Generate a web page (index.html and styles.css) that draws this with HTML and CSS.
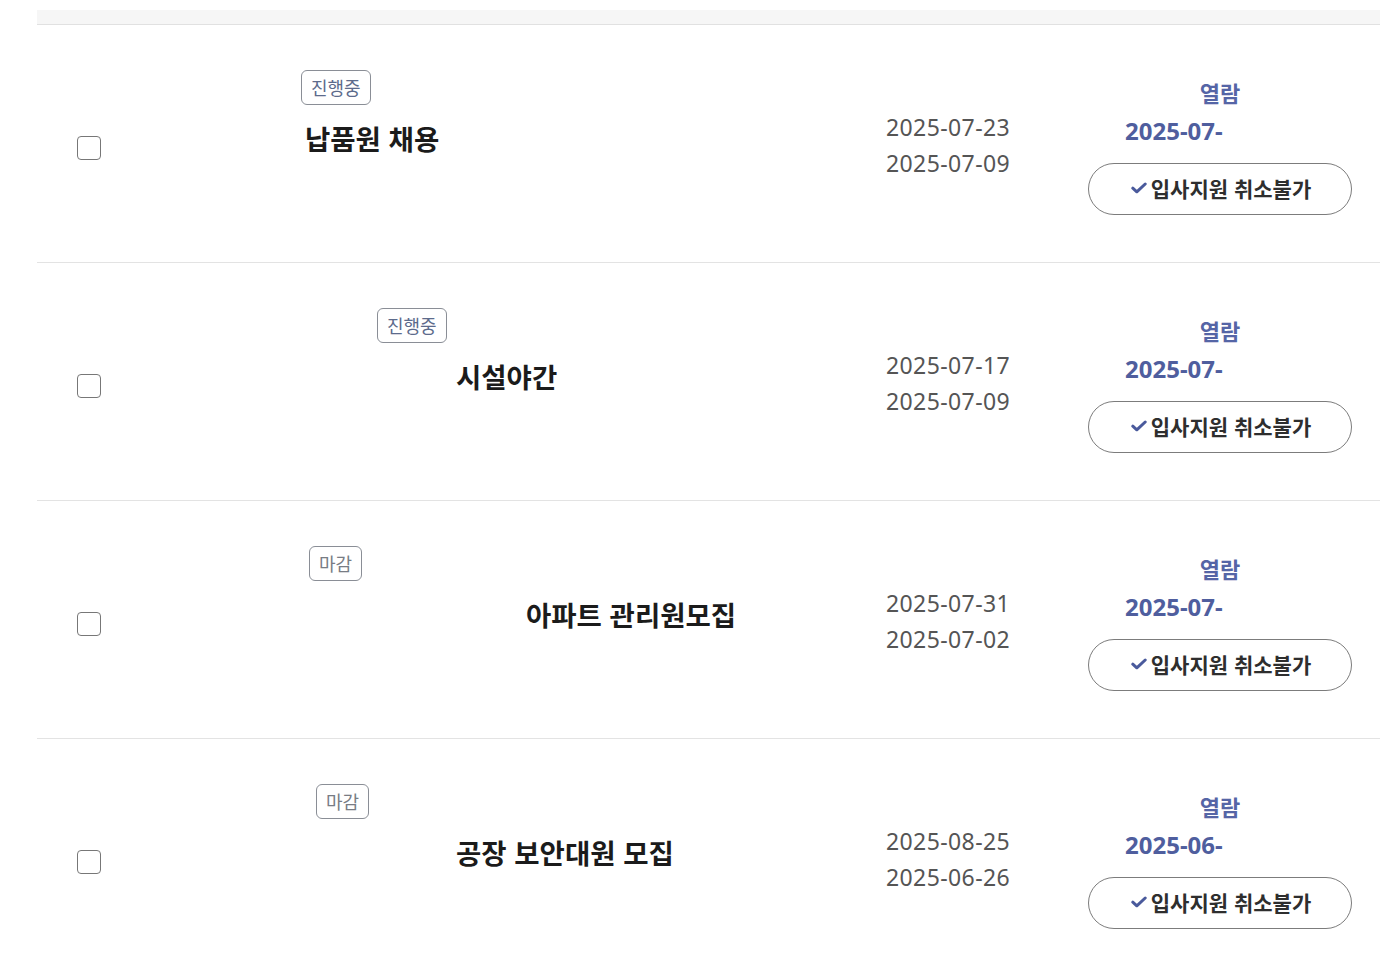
FILE: index.html
```html
<!DOCTYPE html>
<html lang="ko">
<head>
<meta charset="utf-8">
<title>입사지원 현황</title>
<link rel="stylesheet" href="styles.css">
</head>
<body>
<div class="list">
  <div class="list-head"></div>

  <div class="row row-1">
    <div class="cell-check"><span class="checkbox"></span></div>
    <div class="cell-info">
      <span class="badge badge-on">진행중</span>
      <div class="title">납품원 채용</div>
    </div>
    <div class="cell-dates">
      <div class="date">2025-07-23</div>
      <div class="date">2025-07-09</div>
    </div>
    <div class="cell-status">
      <div class="status-label">열람</div>
      <div class="status-date">2025-07-</div>
      <button class="cancel-btn"><svg class="check" viewBox="0 0 16 12"><path d="M1.8 6.2 L5.8 9.8 L14.2 2"/></svg>입사지원 취소불가</button>
    </div>
  </div>

  <div class="row row-2">
    <div class="cell-check"><span class="checkbox"></span></div>
    <div class="cell-info">
      <span class="badge badge-on">진행중</span>
      <div class="title">시설야간</div>
    </div>
    <div class="cell-dates">
      <div class="date">2025-07-17</div>
      <div class="date">2025-07-09</div>
    </div>
    <div class="cell-status">
      <div class="status-label">열람</div>
      <div class="status-date">2025-07-</div>
      <button class="cancel-btn"><svg class="check" viewBox="0 0 16 12"><path d="M1.8 6.2 L5.8 9.8 L14.2 2"/></svg>입사지원 취소불가</button>
    </div>
  </div>

  <div class="row row-3">
    <div class="cell-check"><span class="checkbox"></span></div>
    <div class="cell-info">
      <span class="badge badge-off">마감</span>
      <div class="title">아파트 관리원모집</div>
    </div>
    <div class="cell-dates">
      <div class="date">2025-07-31</div>
      <div class="date">2025-07-02</div>
    </div>
    <div class="cell-status">
      <div class="status-label">열람</div>
      <div class="status-date">2025-07-</div>
      <button class="cancel-btn"><svg class="check" viewBox="0 0 16 12"><path d="M1.8 6.2 L5.8 9.8 L14.2 2"/></svg>입사지원 취소불가</button>
    </div>
  </div>

  <div class="row row-4">
    <div class="cell-check"><span class="checkbox"></span></div>
    <div class="cell-info">
      <span class="badge badge-off">마감</span>
      <div class="title">공장 보안대원 모집</div>
    </div>
    <div class="cell-dates">
      <div class="date">2025-08-25</div>
      <div class="date">2025-06-26</div>
    </div>
    <div class="cell-status">
      <div class="status-label">열람</div>
      <div class="status-date">2025-06-</div>
      <button class="cancel-btn"><svg class="check" viewBox="0 0 16 12"><path d="M1.8 6.2 L5.8 9.8 L14.2 2"/></svg>입사지원 취소불가</button>
    </div>
  </div>
</div>
</body>
</html>
```
FILE: styles.css
```css
html, body {
  margin: 0;
  padding: 0;
  background: #ffffff;
}
body {
  font-family: "Noto Sans", "Noto Sans CJK KR", sans-serif;
  color: #222;
  height: 955px;
  overflow: hidden;
}
.list {
  margin-left: 37px;
  width: 1343px;
}
.list-head {
  margin-top: 10px;
  height: 15px;
  background: #f6f6f6;
  border-bottom: 1px solid #e1e1e1;
  box-sizing: border-box;
}
.row {
  display: flex;
  height: 238px;
  box-sizing: border-box;
  border-bottom: 1px solid #e3e3e3;
  padding-left: 40px;
  padding-right: 28px;
}
.cell-check {
  flex: none;
  width: 24px;
  padding-top: 111px;
}
.checkbox {
  display: block;
  width: 24px;
  height: 24px;
  box-sizing: border-box;
  border: 1.5px solid #777;
  border-radius: 4px;
}
.cell-info {
  flex: 1;
  min-width: 0;
  padding-top: 45px;
  display: flex;
  flex-direction: column;
  align-items: flex-start;
}
.badge {
  display: inline-block;
  height: 35px;
  line-height: 33px;
  box-sizing: border-box;
  padding: 0 9px;
  border: 1px solid #8a8e96;
  border-radius: 6px;
  font-family: "Noto Sans CJK KR", sans-serif;
  font-size: 18px;
}
.badge-on { color: #5d6b8c; }
.badge-off { color: #787c84; }
.title {
  margin-top: 15px;
  line-height: 36px;
  font-family: "Noto Sans CJK KR", sans-serif;
  font-size: 27.5px;
  font-weight: 700;
  color: #1b1b1b;
  white-space: nowrap;
}
.row-1 .badge { margin-left: 200px; }
.row-1 .title { margin-left: 204px; }
.row-2 .badge { margin-left: 276px; }
.row-2 .title { margin-left: 355px; }
.row-3 .badge { margin-left: 208px; }
.row-3 .title { margin-left: 425px; }
.row-4 .badge { margin-left: 215px; }
.row-4 .title { margin-left: 355px; }

.cell-dates {
  flex: none;
  width: 202px;
  padding-top: 84px;
}
.date {
  line-height: 36px;
  font-size: 23px;
  letter-spacing: 0.4px;
  color: #555;
}
.cell-status {
  flex: none;
  width: 264px;
  padding-top: 52px;
  display: flex;
  flex-direction: column;
  align-items: center;
}
.status-label {
  line-height: 30px;
  font-family: "Noto Sans CJK KR", sans-serif;
  font-size: 22px;
  font-weight: 700;
  color: #5565a6;
}
.status-date {
  align-self: flex-start;
  margin-top: 8px;
  padding-left: 37px;
  line-height: 32px;
  font-size: 24px;
  font-weight: 700;
  color: #4f5e9e;
}
.cancel-btn {
  margin-top: 16px;
  width: 264px;
  height: 52px;
  box-sizing: border-box;
  border: 1px solid #7c7c7c;
  border-radius: 26px;
  background: #fff;
  display: flex;
  align-items: center;
  justify-content: center;
  gap: 4px;
  font-family: "Noto Sans CJK KR", sans-serif;
  font-size: 21px;
  font-weight: 600;
  color: #2e2e2e;
  padding: 0 0 2px 2px;
}
.check {
  width: 16px;
  height: 12px;
  fill: none;
  stroke: #4a5a9c;
  stroke-width: 3;
  stroke-linecap: round;
  stroke-linejoin: round;
}
```
